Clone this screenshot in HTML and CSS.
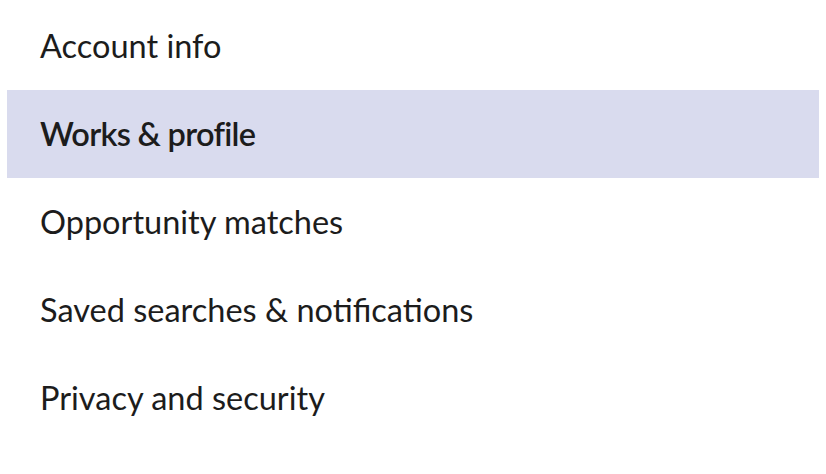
FILE: index.html
```html
<!DOCTYPE html>
<html>
<head>
<meta charset="utf-8">
<link rel="stylesheet" href="styles.css">
</head>
<body>
<nav class="menu">
  <a class="item">Account info</a>
  <a class="item active">Works &amp; profile</a>
  <a class="item">Opportunity matches</a>
  <a class="item">Saved searches &amp; notifications</a>
  <a class="item">Privacy and security</a>
</nav>
</body>
</html>
```
FILE: styles.css
```css
html, body {
  margin: 0;
  padding: 0;
  background: #ffffff;
}
.menu {
  display: flex;
  flex-direction: column;
  padding: 2px 7px 0 7px;
}
.item {
  display: flex;
  align-items: center;
  height: 88px;
  padding-left: 33px;
  padding-bottom: 2px;
  font-family: "Lato", "Liberation Sans", sans-serif;
  font-size: 32.5px;
  font-weight: 400;
  color: #1c1c1c;
  box-sizing: border-box;
}
.item.active {
  background: #d9dbee;
  font-weight: 600;
  letter-spacing: -0.7px;
}
```
